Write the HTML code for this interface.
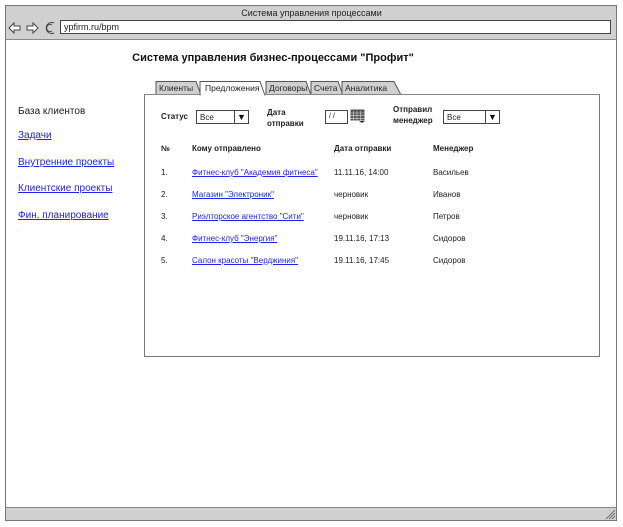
<!DOCTYPE html>
<html><head><meta charset="utf-8"><style>
*{margin:0;padding:0;box-sizing:border-box}
body{width:623px;height:527px;background:#fff;font-family:"Liberation Sans",Arial,sans-serif;position:relative;overflow:hidden;color:#222}
.a{position:absolute}
.win{left:5px;top:5px;width:612px;height:516px;border:1px solid #777}
.hdr{left:6px;top:6px;width:610px;height:34px;background:#d0d0d0;border-bottom:1px solid #888}
.stat{left:6px;top:507px;width:610px;height:13px;background:#d0d0d0;border-top:1px solid #888}
.t{font-size:9px;white-space:nowrap}
a,.lk{color:#2222ee;text-decoration:underline}
.b{font-weight:bold}
.sel{height:14px;border:1px solid #444;background:#fff;font-size:8px;padding:2px 3px}
.sel i{position:absolute;right:0;top:0;width:14px;height:12px;border-left:1px solid #444;font-style:normal;font-size:9px;text-align:center;line-height:12px;color:#111}
.dot{font-size:6px;color:#99f}
</style></head><body>
<div class="a win"></div>
<div class="a hdr"></div>
<div class="a t" style="left:0;width:623px;text-align:center;top:8px;font-size:9px">Система управления процессами</div>
<svg class="a" style="left:8px;top:20px" width="52" height="16" viewBox="0 0 52 16" fill="none" stroke="#444" stroke-width="1">
<path d="M1 8 L6 3 V6 H12 V10 H6 V13 Z" fill="#fff"/>
<path d="M30 8 L25 3 V6 H19 V10 H25 V13 Z" fill="#fff"/>
<path d="M46 3 A5.5 5.5 0 1 0 46 13 M44 5 A3.5 3.5 0 1 0 44 11"/>
</svg>
<div class="a" style="left:60px;top:20px;width:551px;height:14px;border:1px solid #444;background:#fff;font-size:9px;padding:1px 3px">ypfirm.ru/bpm</div>
<div class="a b" style="left:0;width:546px;text-align:center;top:52px;font-size:11px;color:#111">Система управления бизнес-процессами "Профит"</div>
<svg class="a" style="left:150px;top:80px" width="260" height="16">
<g stroke="#555" stroke-width="1" font-family="Liberation Sans,sans-serif" font-size="8.5">
<path d="M6 15 V1.5 H46 L51 15" fill="#d0d0d0"/>
<path d="M116 15 V1.5 H156 L161 15" fill="#d0d0d0"/>
<path d="M161 15 V1.5 H188 L193 15" fill="#d0d0d0"/>
<path d="M192 15 V1.5 H244 L251 15" fill="#d0d0d0"/>
<path d="M50 15.5 V1.5 H110 L115 15.5" fill="#fff"/>
<text x="9" y="11" fill="#222" stroke="none">Клиенты</text>
<text x="55" y="11" fill="#222" stroke="none">Предложения</text>
<text x="119" y="11" fill="#222" stroke="none">Договоры</text>
<text x="164" y="11" fill="#222" stroke="none">Счета</text>
<text x="195" y="11" fill="#222" stroke="none">Аналитика</text>
</g></svg>
<div class="a" style="left:144px;top:94px;width:456px;height:263px;border:1px solid #777;border-top-color:#888"></div>
<div class="a" style="left:201px;top:94px;width:63px;height:2px;background:#fff"></div>
<div class="a t" style="left:18px;top:106px;font-size:10px">База клиентов</div>
<div class="a t lk" style="left:18px;top:130px;font-size:10px">Задачи</div>
<div class="a t lk" style="left:18px;top:157px;font-size:10px">Внутренние проекты</div>
<div class="a t lk" style="left:18px;top:183px;font-size:10px">Клиентские проекты</div>
<div class="a t lk" style="left:18px;top:210px;font-size:10px">Фин. планирование</div>
<div class="a dot" style="left:18px;top:147px">.</div>
<div class="a dot" style="left:18px;top:174px">.</div>
<div class="a dot" style="left:18px;top:200px">.</div>
<div class="a dot" style="left:18px;top:227px">.</div>

<div class="a t b" style="left:161px;top:112px;font-size:8px">Статус</div>
<div class="a sel" style="left:196px;top:110px;width:53px">Все<i>▼</i></div>
<div class="a t b" style="left:267px;top:107px;font-size:8px;line-height:11px">Дата<br>отправки</div>
<div class="a sel" style="left:325px;top:110px;width:23px;font-size:7px">/ /</div>
<svg class="a" style="left:350px;top:109px" width="16" height="14"><rect x="0.5" y="0.5" width="14" height="11" fill="#555"/><g stroke="#ddd" stroke-width="0.6"><path d="M0 4H15M0 6.7H15M0 9.3H15M3.5 2V12M7 2V12M10.5 2V12"/></g><path d="M9 12 L15 12 L12 14Z" fill="#333"/></svg>
<div class="a t b" style="left:393px;top:104px;font-size:8px;line-height:11px">Отправил<br>менеджер</div>
<div class="a sel" style="left:443px;top:110px;width:57px">Все<i>▼</i></div>

<div class="a t b" style="left:161px;top:144px;font-size:8px">№</div>
<div class="a t b" style="left:192px;top:144px;font-size:8px">Кому отправлено</div>
<div class="a t b" style="left:334px;top:144px;font-size:8px">Дата отправки</div>
<div class="a t b" style="left:433px;top:144px;font-size:8px">Менеджер</div>

<div class="a t" style="left:161px;top:168px;font-size:8px">1.</div>
<div class="a t lk" style="left:192px;top:168px;font-size:8px">Фитнес-клуб "Академия фитнеса"</div>
<div class="a t" style="left:334px;top:168px;font-size:8px">11.11.16, 14:00</div>
<div class="a t" style="left:433px;top:168px;font-size:8px">Васильев</div>
<div class="a t" style="left:161px;top:190px;font-size:8px">2.</div>
<div class="a t lk" style="left:192px;top:190px;font-size:8px">Магазин "Электроник"</div>
<div class="a t" style="left:334px;top:190px;font-size:8px">черновик</div>
<div class="a t" style="left:433px;top:190px;font-size:8px">Иванов</div>
<div class="a t" style="left:161px;top:212px;font-size:8px">3.</div>
<div class="a t lk" style="left:192px;top:212px;font-size:8px">Риэлторское агентство "Сити"</div>
<div class="a t" style="left:334px;top:212px;font-size:8px">черновик</div>
<div class="a t" style="left:433px;top:212px;font-size:8px">Петров</div>
<div class="a t" style="left:161px;top:234px;font-size:8px">4.</div>
<div class="a t lk" style="left:192px;top:234px;font-size:8px">Фитнес-клуб "Энергия"</div>
<div class="a t" style="left:334px;top:234px;font-size:8px">19.11.16, 17:13</div>
<div class="a t" style="left:433px;top:234px;font-size:8px">Сидоров</div>
<div class="a t" style="left:161px;top:256px;font-size:8px">5.</div>
<div class="a t lk" style="left:192px;top:256px;font-size:8px">Салон красоты "Верджиния"</div>
<div class="a t" style="left:334px;top:256px;font-size:8px">19.11.16, 17:45</div>
<div class="a t" style="left:433px;top:256px;font-size:8px">Сидоров</div>

<div class="a stat"></div>
<svg class="a" style="left:605px;top:509px" width="11" height="11" stroke="#555" stroke-width="0.8"><path d="M1 10L10 1M4 10L10 4M7 10L10 7"/></svg>
</body></html>
